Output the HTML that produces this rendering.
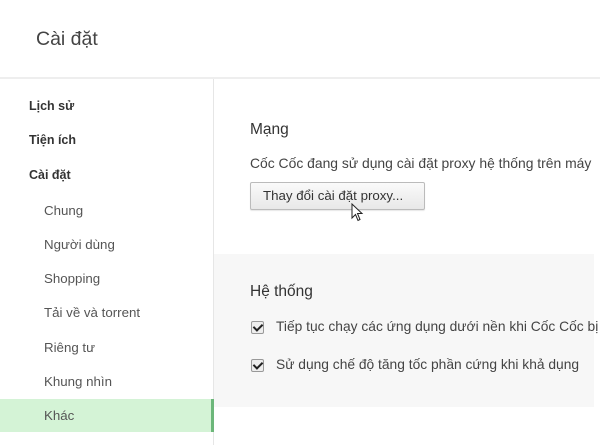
<!DOCTYPE html>
<html><head><meta charset="utf-8"><style>
html,body{margin:0;width:600px;height:445px;overflow:hidden}
body{background:#fff;font-family:"Liberation Sans","DejaVu Sans",sans-serif;color:#333;position:relative}
.wrap{position:absolute;left:0;top:0;width:600px;height:445px;overflow:hidden}
.a{position:absolute;white-space:nowrap}
.side{font-size:13.3px;color:#555}
.b{font-weight:bold;color:#333;font-size:12.5px}
.cb{position:absolute;width:11px;height:11px;border:1px solid #999;background:#eee;border-radius:2px}
.cb:after{content:"";position:absolute;left:3px;top:0px;width:4px;height:7px;border:solid #222;border-width:0 2px 2px 0;transform:rotate(45deg)}
.clip{overflow:hidden}
</style></head><body><div class="wrap">
<div class="a" style="left:36px;top:28px;font-size:19.5px;color:#444">Cài đặt</div>
<div class="a" style="left:0;top:77px;width:600px;height:2px;background:#eee"></div>
<div class="a" style="left:213px;top:79px;width:1px;height:366px;background:#e6e6e6"></div>
<div class="a" style="left:0;top:399px;width:211px;height:33px;background:#d4f3d6"></div>
<div class="a" style="left:211px;top:399px;width:3px;height:33px;background:#6cb77a"></div>
<div class="a side b" style="left:29px;top:99px">Lịch sử</div>
<div class="a side b" style="left:29px;top:133px">Tiện ích</div>
<div class="a side b" style="left:29px;top:168px">Cài đặt</div>
<div class="a side" style="left:44px;top:203px">Chung</div>
<div class="a side" style="left:44px;top:237px">Người dùng</div>
<div class="a side" style="left:44px;top:271px">Shopping</div>
<div class="a side" style="left:44px;top:305px">Tải về và torrent</div>
<div class="a side" style="left:44px;top:340px">Riêng tư</div>
<div class="a side" style="left:44px;top:374px">Khung nhìn</div>
<div class="a side" style="left:44px;top:408px">Khác</div>
<div class="a" style="left:250px;top:121px;font-size:15.5px;color:#333">Mạng</div>
<div class="a clip" style="left:250px;top:155px;width:350px;font-size:13.9px;color:#444">Cốc Cốc đang sử dụng cài đặt proxy hệ thống trên máy</div>
<div class="a" style="left:250px;top:182px;width:173px;height:26px;border:1px solid #bbb;border-radius:2px;background:linear-gradient(#fafafa,#e8e8e8);box-shadow:0 1px 1px rgba(0,0,0,.1)"></div>
<div class="a" style="left:263px;top:188px;font-size:13.3px;color:#333">Thay đổi cài đặt proxy...</div>
<svg class="a" style="left:351px;top:203px" width="14" height="20" viewBox="0 0 14 20"><path d="M1 1 L1 15 L4.5 11.5 L7 17.5 L9 16.5 L6.5 10.5 L11 10.5 Z" fill="#fff" stroke="#222" stroke-width="1"/></svg>
<div class="a" style="left:214px;top:254px;width:380px;height:153px;background:#f7f7f7"></div>
<div class="a" style="left:250px;top:283px;font-size:15.5px;color:#333">Hệ thống</div>
<div class="cb" style="left:251px;top:321px"></div>
<div class="a clip" style="left:276px;top:319px;width:324px;font-size:13.8px;color:#444">Tiếp tục chạy các ứng dụng dưới nền khi Cốc Cốc bị đóng</div>
<div class="cb" style="left:251px;top:359px"></div>
<div class="a" style="left:276px;top:357px;font-size:13.8px;color:#444">Sử dụng chế độ tăng tốc phần cứng khi khả dụng</div>
</div></body></html>
